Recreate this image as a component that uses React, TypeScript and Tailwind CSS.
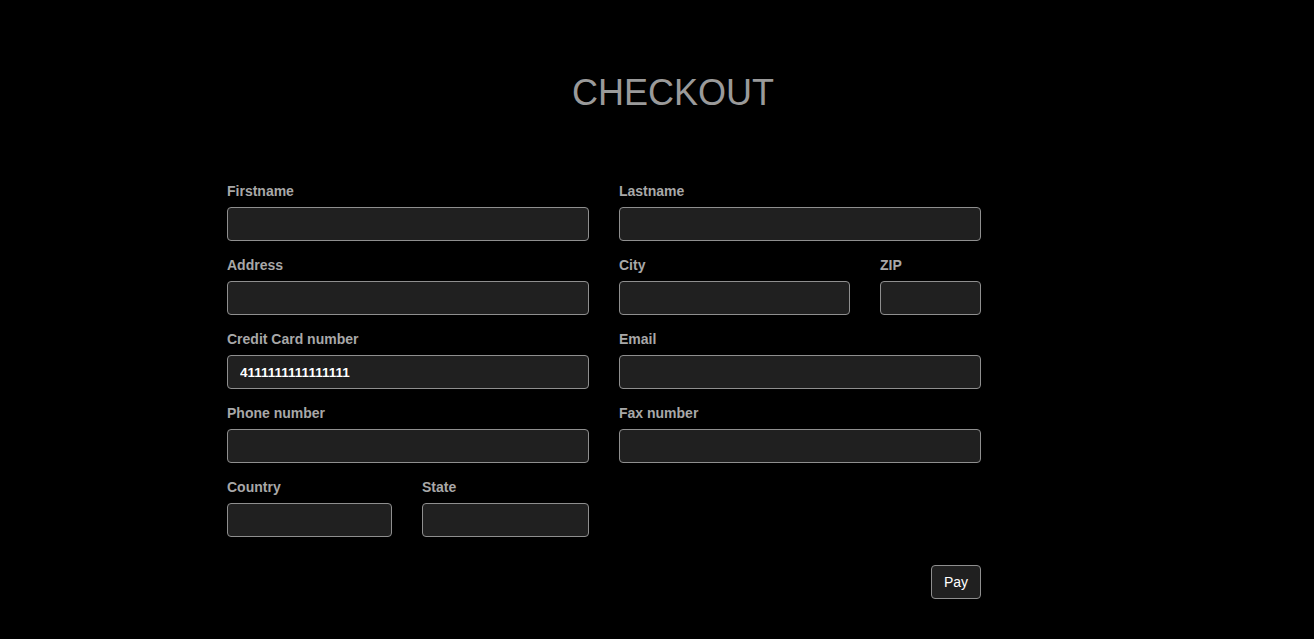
import React from 'react';

const Field = ({ label, value, width }: { label: string; value?: string; width: string }) => (
  <div className={`flex flex-col ${width}`}>
    <label className="mb-[8px] h-[16px] text-[14px] leading-[16px] font-bold text-[#a8a8a8]">{label}</label>
    <input
      readOnly
      value={value ?? ''}
      className="h-[34px] w-full rounded-[4px] border border-[#8f8f8f] bg-[#202020] px-[12px] text-[13.5px] font-bold text-white outline-none"
    />
  </div>
);

const App = () => {
  return (
    <div
      className="min-h-[639px] w-full bg-black"
      style={{ fontFamily: '"Liberation Sans", Arial, sans-serif' }}
    >
      <div className="flex justify-center pl-[32px] pt-[75px]">
        <h1 className="text-[36px] leading-none font-normal text-[#9a9a9a]">CHECKOUT</h1>
      </div>

      <form className="ml-[227px] mt-[72px] flex w-[754px] flex-col gap-[16px]">
        <div className="flex gap-[30px]">
          <Field label="Firstname" width="w-[362px]" />
          <Field label="Lastname" width="w-[362px]" />
        </div>
        <div className="flex gap-[30px]">
          <Field label="Address" width="w-[362px]" />
          <Field label="City" width="w-[231px]" />
          <Field label="ZIP" width="w-[101px]" />
        </div>
        <div className="flex gap-[30px]">
          <Field label="Credit Card number" value="4111111111111111" width="w-[362px]" />
          <Field label="Email" width="w-[362px]" />
        </div>
        <div className="flex gap-[30px]">
          <Field label="Phone number" width="w-[362px]" />
          <Field label="Fax number" width="w-[362px]" />
        </div>
        <div className="flex gap-[30px]">
          <Field label="Country" width="w-[165px]" />
          <Field label="State" width="w-[167px]" />
        </div>
        <div className="mt-[12px] flex justify-end">
          <button
            type="button"
            className="h-[34px] w-[50px] rounded-[4px] border border-[#8f8f8f] bg-[#202020] text-[14px] text-white"
          >
            Pay
          </button>
        </div>
      </form>
    </div>
  );
};

export default App;
